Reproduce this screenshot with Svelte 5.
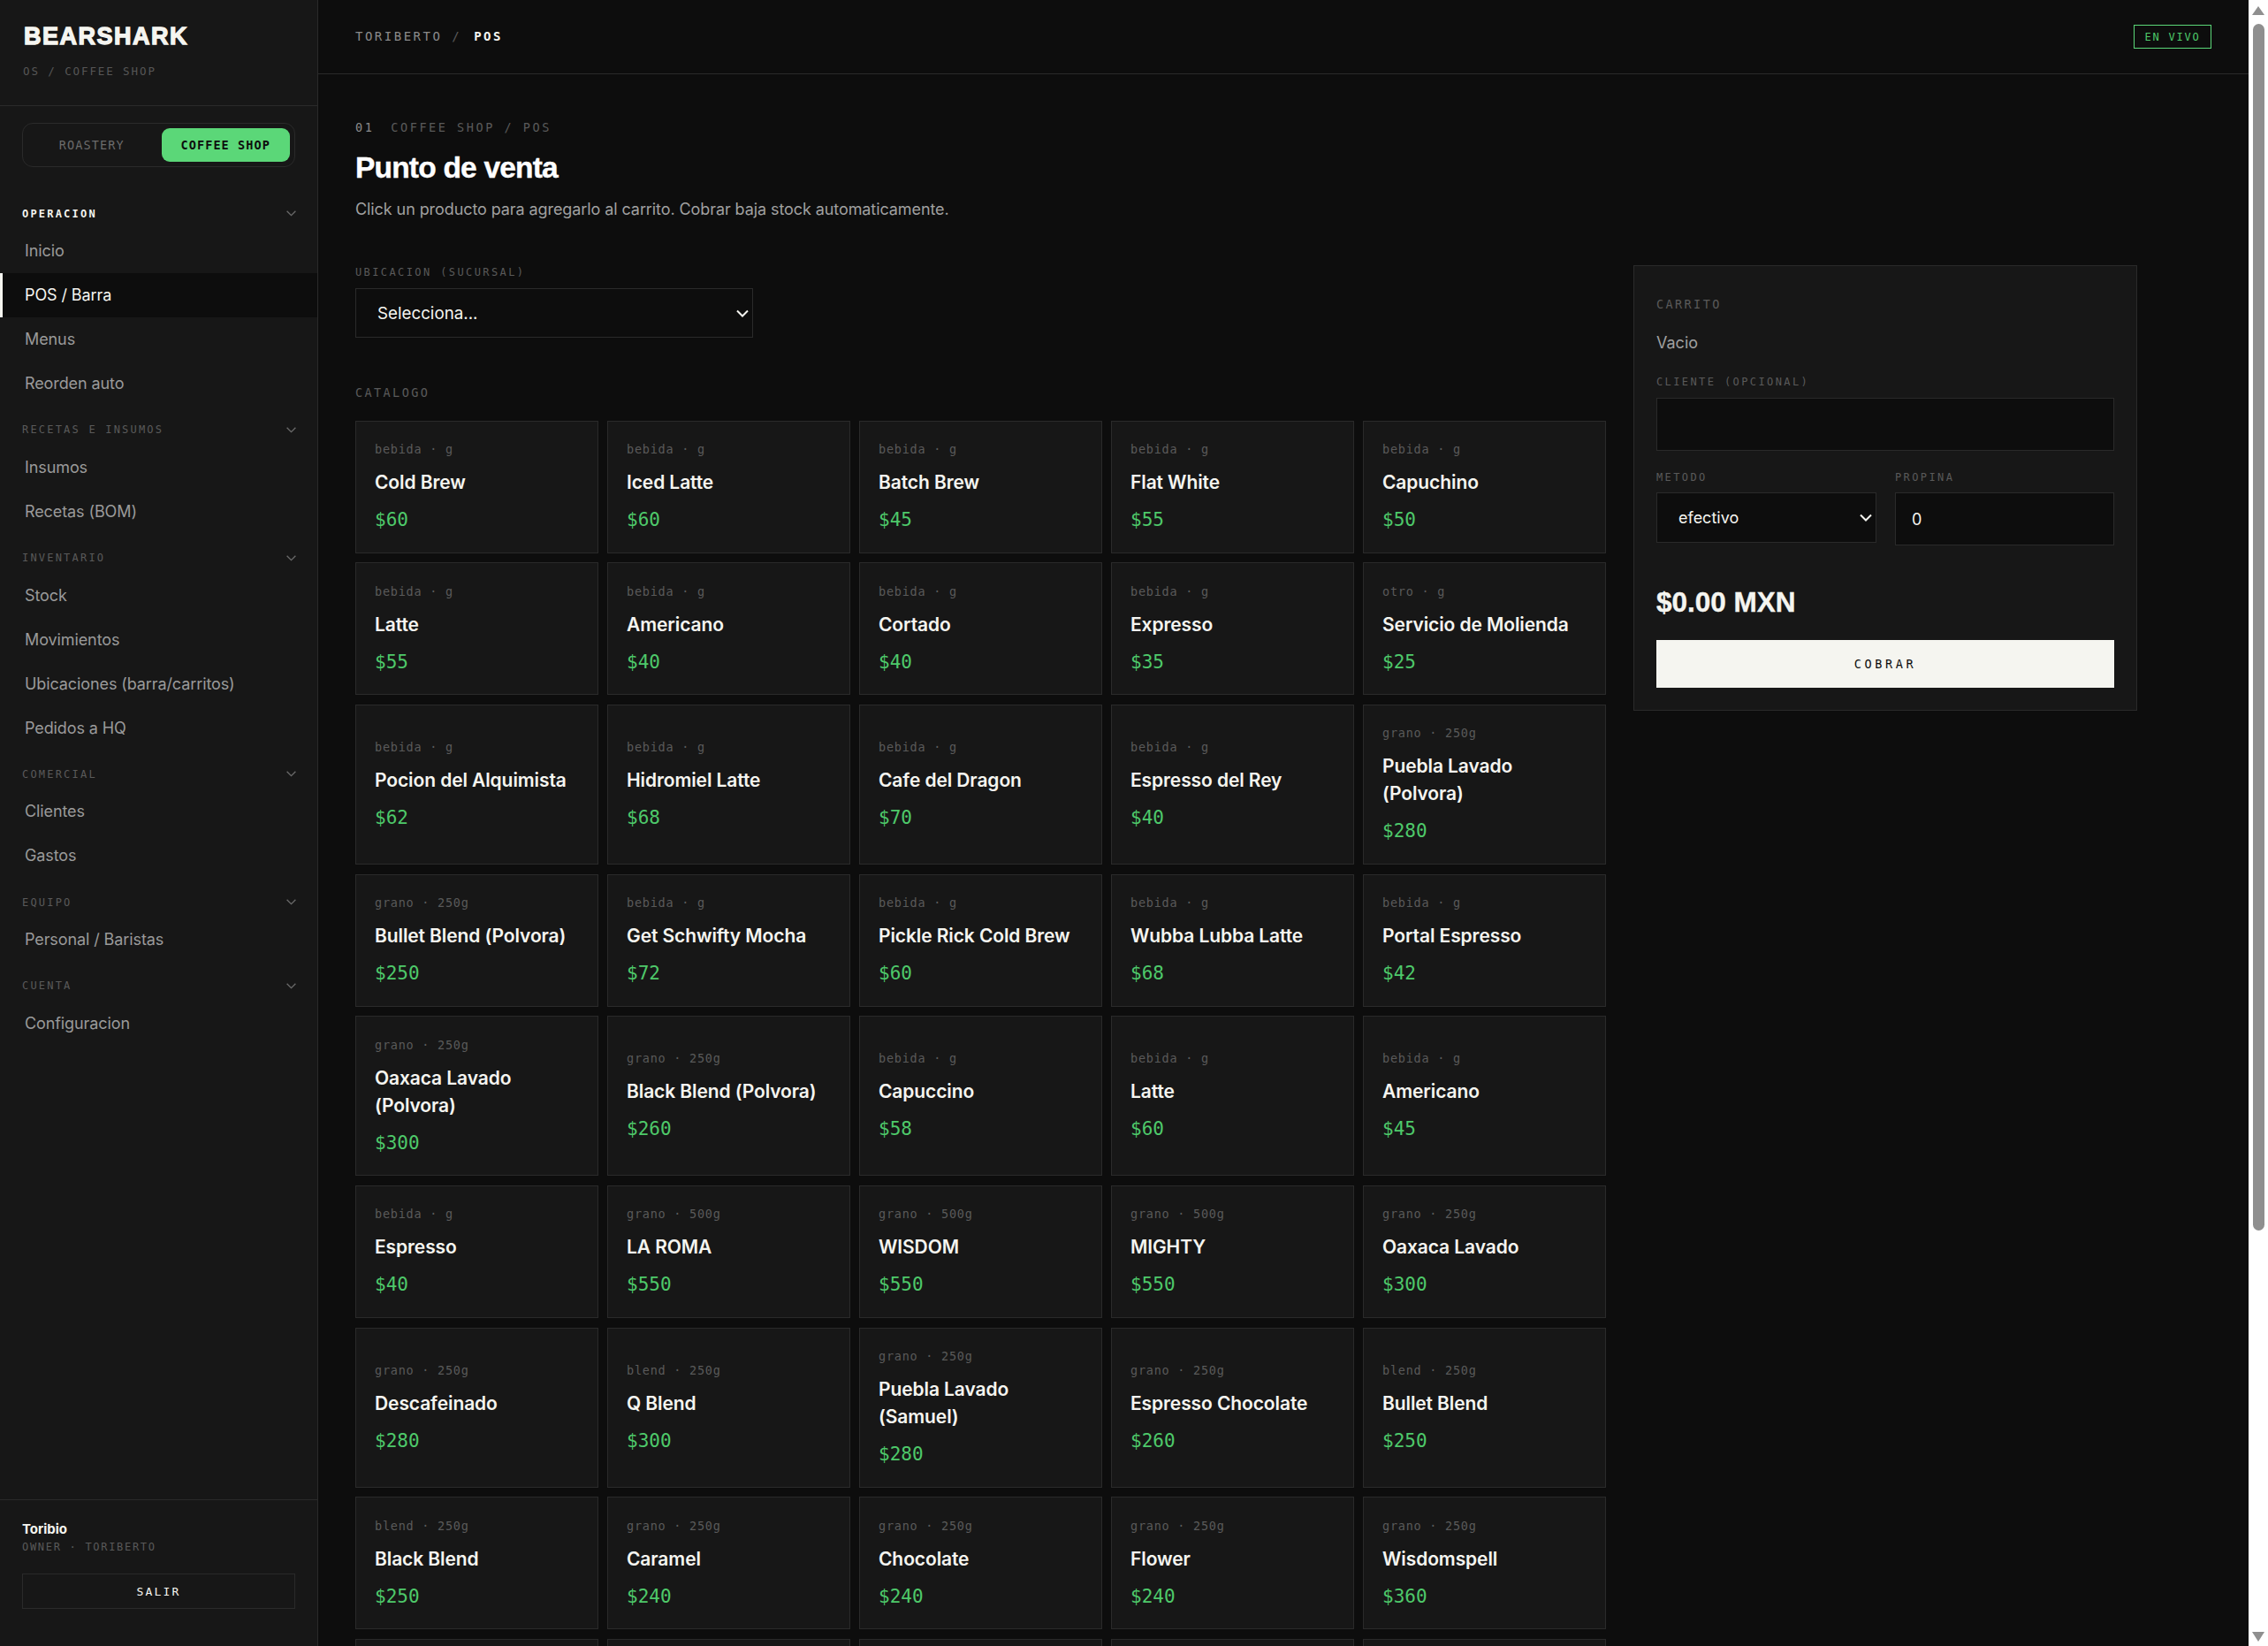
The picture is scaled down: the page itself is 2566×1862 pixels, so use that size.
<script>
  const navGroups = [
    { title: 'OPERACION', open: true, items: ['Inicio', 'POS / Barra', 'Menus', 'Reorden auto'] },
    { title: 'RECETAS E INSUMOS', items: ['Insumos', 'Recetas (BOM)'] },
    { title: 'INVENTARIO', items: ['Stock', 'Movimientos', 'Ubicaciones (barra/carritos)', 'Pedidos a HQ'] },
    { title: 'COMERCIAL', items: ['Clientes', 'Gastos'] },
    { title: 'EQUIPO', items: ['Personal / Baristas'] },
    { title: 'CUENTA', items: ['Configuracion'] }
  ];
  const p = (k, n, pr) => ({ k, n, pr });
  const products = [
    p('bebida · g','Cold Brew','$60'),p('bebida · g','Iced Latte','$60'),p('bebida · g','Batch Brew','$45'),p('bebida · g','Flat White','$55'),p('bebida · g','Capuchino','$50'),
    p('bebida · g','Latte','$55'),p('bebida · g','Americano','$40'),p('bebida · g','Cortado','$40'),p('bebida · g','Expresso','$35'),p('otro · g','Servicio de Molienda','$25'),
    p('bebida · g','Pocion del Alquimista','$62'),p('bebida · g','Hidromiel Latte','$68'),p('bebida · g','Cafe del Dragon','$70'),p('bebida · g','Espresso del Rey','$40'),p('grano · 250g','Puebla Lavado (Polvora)','$280'),
    p('grano · 250g','Bullet Blend (Polvora)','$250'),p('bebida · g','Get Schwifty Mocha','$72'),p('bebida · g','Pickle Rick Cold Brew','$60'),p('bebida · g','Wubba Lubba Latte','$68'),p('bebida · g','Portal Espresso','$42'),
    p('grano · 250g','Oaxaca Lavado (Polvora)','$300'),p('grano · 250g','Black Blend (Polvora)','$260'),p('bebida · g','Capuccino','$58'),p('bebida · g','Latte','$60'),p('bebida · g','Americano','$45'),
    p('bebida · g','Espresso','$40'),p('grano · 500g','LA ROMA','$550'),p('grano · 500g','WISDOM','$550'),p('grano · 500g','MIGHTY','$550'),p('grano · 250g','Oaxaca Lavado','$300'),
    p('grano · 250g','Descafeinado','$280'),p('blend · 250g','Q Blend','$300'),p('grano · 250g','Puebla Lavado (Samuel)','$280'),p('grano · 250g','Espresso Chocolate','$260'),p('blend · 250g','Bullet Blend','$250'),
    p('blend · 250g','Black Blend','$250'),p('grano · 250g','Caramel','$240'),p('grano · 250g','Chocolate','$240'),p('grano · 250g','Flower','$240'),p('grano · 250g','Wisdomspell','$360'),
    p('','',''),p('','',''),p('','',''),p('','',''),p('','','')
  ];
</script>

<div class="shell">
  <aside class="side">
    <div class="brand">
      <div class="logo">BEARSHARK</div>
      <div class="tag">OS / COFFEE SHOP</div>
    </div>
    <div class="switchwrap">
      <div class="switch">
        <button class="sw">ROASTERY</button>
        <button class="sw on">COFFEE SHOP</button>
      </div>
    </div>
    <nav class="nav">
      {#each navGroups as g}
        <div class="group">
          <div class="ghead" class:open={g.open}>
            <span>{g.title}</span>
            <svg width="13" height="13" viewBox="0 0 24 24" fill="none" stroke="#6b6b6b" stroke-width="2.4"><path d="M3 7l9 9 9-9"/></svg>
          </div>
          {#each g.items as it}
            <div class="item" class:active={it === 'POS / Barra'}>{it}</div>
          {/each}
        </div>
      {/each}
    </nav>
    <div class="user">
      <div class="uname">Toribio</div>
      <div class="urole">OWNER · TORIBERTO</div>
      <button class="logout">SALIR</button>
    </div>
  </aside>

  <div class="main">
    <header class="top">
      <div class="crumb">TORIBERTO <span class="sl">/</span> <b>POS</b></div>
      <div class="live">EN VIVO</div>
    </header>
    <div class="content">
      <div class="eyebrow"><b>01</b><span>COFFEE SHOP / POS</span></div>
      <h1>Punto de venta</h1>
      <p class="sub">Click un producto para agregarlo al carrito. Cobrar baja stock automaticamente.</p>
      <div class="cols">
        <section class="left">
          <div class="lab loc">UBICACION (SUCURSAL)</div>
          <div class="selwrap locwrap">
            <select class="ctl locsel"><option>Selecciona...</option></select>
            <svg class="chev" width="16" height="10" viewBox="0 0 16 10" fill="none" stroke="#f5f5f0" stroke-width="2"><path d="M2 1.5l6 6 6-6"/></svg>
          </div>
          <div class="cat">CATALOGO</div>
          <div class="grid">
            {#each products as x}
              <button class="card">
                {#if x.n}
                  <span class="meta">{x.k}</span>
                  <span class="name">{x.n}</span>
                  <span class="price">{x.pr}</span>
                {/if}
              </button>
            {/each}
          </div>
        </section>
        <aside class="cart">
          <div class="ct">CARRITO</div>
          <div class="empty">Vacio</div>
          <div class="lab cli">CLIENTE (OPCIONAL)</div>
          <input class="ctl inp" />
          <div class="two">
            <div>
              <div class="lab">METODO</div>
              <div class="selwrap mwrap">
                <select class="ctl msel"><option>efectivo</option></select>
                <svg class="chev" width="16" height="10" viewBox="0 0 16 10" fill="none" stroke="#f5f5f0" stroke-width="2"><path d="M2 1.5l6 6 6-6"/></svg>
              </div>
            </div>
            <div>
              <div class="lab">PROPINA</div>
              <input class="ctl inp tip" value="0" />
            </div>
          </div>
          <div class="total">$0.00 MXN</div>
          <button class="pay">COBRAR</button>
        </aside>
      </div>
    </div>
  </div>

  <div class="bar">
    <i class="up"></i>
    <i class="thumb"></i>
    <i class="down"></i>
  </div>
</div>

<style>
  :global(html), :global(body) { margin: 0; height: 100%; overflow: hidden; background: #0d0d0d; }
  :global(*) { box-sizing: border-box; }
  .shell { --mono: "DejaVu Sans Mono", monospace; display: flex; height: 1862px; overflow: hidden; font-family: Inter, "Liberation Sans", sans-serif; color: #f5f5f0; background: #0d0d0d; }
  .side { width: 360px; flex: none; background: #171717; border-right: 1px solid #2a2a2a; display: flex; flex-direction: column; height: 1862px; }
  .brand { height: 120px; padding: 24px 27px 0; border-bottom: 1px solid #2a2a2a; }
  .logo { font-family: "Liberation Sans", sans-serif; font-weight: 700; font-size: 27px; line-height: 34px; letter-spacing: 1.5px; -webkit-text-stroke: 1.3px #f5f5f0; }
  .tag { font-family: var(--mono); font-size: 12.5px; letter-spacing: 1.9px; color: #565656; margin-top: 16px; line-height: 14px; margin-left: -1px; }
  .switchwrap { padding: 19px 25px 0; }
  .switch { display: flex; height: 50px; border: 1px solid #2a2a2a; border-radius: 12px; padding: 5px; gap: 6px; }
  .sw { flex: 1 1 0; min-width: 0; border: 0; background: none; border-radius: 9px; font-family: var(--mono); font-size: 13.5px; letter-spacing: 1.1px; color: #6b6b6b; padding: 0; white-space: nowrap; }
  .sw.on { background: #5bd778; color: #0d0d0d; font-weight: 700; }
  .nav { padding-top: 43.5px; flex: 1; }
  .group { margin-bottom: 18.8px; }
  .ghead { display: flex; justify-content: space-between; align-items: center; padding: 0 23px 0 25px; height: 18px; font-family: var(--mono); font-size: 12px; letter-spacing: 2.2px; color: #5a5a5a; margin-bottom: 8px; }
  .ghead.open { color: #f5f5f0; font-weight: 700; }
  .item { height: 50px; display: flex; align-items: center; padding-left: 28px; font-size: 18px; letter-spacing: -0.1px; color: #9a9a9a; }
  .item.active { background: #0d0d0d; color: #f5f5f0; border-left: 3px solid #f5f5f0; padding-left: 25px; }
  .user { height: 166px; border-top: 1px solid #2a2a2a; padding: 23px 25px 0; }
  .uname { font-weight: 700; font-size: 15px; line-height: 20px; }
  .urole { font-family: var(--mono); font-size: 12px; letter-spacing: 1.7px; color: #5a5a5a; line-height: 16px; margin-top: 2px; }
  .logout { display: block; width: 309px; height: 40px; margin-top: 22px; background: none; border: 1px solid #2a2a2a; color: #f5f5f0; font-family: var(--mono); font-size: 13px; letter-spacing: 2.2px; }
  .main { flex: 1; min-width: 0; height: 1862px; overflow: hidden; }
  .top { height: 84px; border-bottom: 1px solid #2a2a2a; display: flex; justify-content: space-between; align-items: center; padding: 0 42px; }
  .crumb { font-family: var(--mono); font-size: 14px; letter-spacing: 2.5px; color: #8a8a8a; margin-top: -1px; }
  .crumb .sl { color: #5a5a5a; margin-right: 3px; }
  .crumb b { color: #f5f5f0; }
  .live { border: 1px solid #5bd778; color: #4ec96a; font-family: var(--mono); font-size: 12px; letter-spacing: 1.8px; height: 27px; width: 88px; display: flex; align-items: center; justify-content: center; }
  .content { padding: 52px 42px 0; width: 2058px; }
  .eyebrow { display: flex; gap: 19px; font-family: var(--mono); font-size: 13.5px; letter-spacing: 2.55px; color: #5a5a5a; line-height: 16px; }
  .eyebrow b { color: #8a8a8a; font-weight: 400; }
  h1 { margin: 17px 0 0; font-family: "Liberation Sans", sans-serif; font-size: 33.5px; line-height: 42px; font-weight: 700; letter-spacing: -0.8px; color: #fff; -webkit-text-stroke: 0.4px #fff; }
  .sub { margin: 12px 0 0; font-size: 18px; letter-spacing: -0.085px; line-height: 28px; color: #a0a0a0; }
  .cols { display: grid; grid-template-columns: 1415px 570px; column-gap: 31px; margin-top: 49px; align-items: start; }
  .lab { font-family: var(--mono); font-size: 12px; letter-spacing: 2.4px; color: #5a5a5a; line-height: 14px; }
  .lab.loc { margin-top: 1px; }
  .ctl { background: #0d0d0d; border: 1px solid #2a2a2a; color: #f5f5f0; font-family: Inter, sans-serif; font-size: 18px; border-radius: 0; outline: none; }
  .selwrap { position: relative; }
  select.ctl { appearance: none; -webkit-appearance: none; }
  .chev { position: absolute; right: 4px; top: 50%; margin-top: -4px; pointer-events: none; }
  .locwrap { width: 450px; margin-top: 11px; }
  .locsel { display: block; width: 100%; height: 56px; padding: 0 24px; font-size: 18.75px; }
  .cat { font-family: var(--mono); font-size: 13.5px; letter-spacing: 2.4px; color: #5a5a5a; line-height: 16px; margin-top: 53.5px; }
  .grid { display: grid; grid-template-columns: repeat(5, 275px); gap: 10.7px 10px; margin-top: 24px; }
  .card { min-height: 150px; background: #171717; border: 1px solid #2a2a2a; display: flex; flex-direction: column; justify-content: center; align-items: flex-start; padding: 22.5px 21px; text-align: left; font-family: inherit; color: inherit; }
  .meta { font-family: var(--mono); font-size: 13.5px; letter-spacing: 0.75px; color: #5a5a5a; line-height: 18px; }
  .name { font-size: 21px; font-weight: 600; letter-spacing: -0.1px; line-height: 31px; margin-top: 13px; }
  .price { font-family: var(--mono); font-size: 21px; color: #4ec96a; line-height: 27px; margin-top: 14px; }
  .cart { background: #171717; border: 1px solid #2a2a2a; padding: 35px 25px 25px; }
  .ct { font-family: var(--mono); font-size: 13.5px; letter-spacing: 2.4px; color: #5a5a5a; line-height: 16px; }
  .empty { font-size: 18px; color: #a0a0a0; line-height: 28px; margin-top: 22px; }
  .lab.cli { margin-top: 22.5px; }
  .inp { display: block; width: 100%; height: 60px; margin-top: 11.5px; padding: 0 18px; }
  .two { display: grid; grid-template-columns: 249px 248px; gap: 21px; margin-top: 22.5px; }
  .tip { margin-top: 10.5px; }
  .mwrap { margin-top: 10.5px; }
  .msel { display: block; width: 100%; height: 56.5px; padding: 0 24px; }
  .total { font-family: "Liberation Sans", sans-serif; font-weight: 700; font-size: 31.5px; line-height: 40px; margin-top: 43.5px; -webkit-text-stroke: 0.4px #f5f5f0; }
  .pay { display: block; width: 100%; height: 54px; margin-top: 23px; background: #f5f5f0; border: 0; color: #0d0d0d; font-family: var(--mono); font-size: 13.5px; letter-spacing: 3.6px; }
  .bar { width: 22px; flex: none; height: 1862px; background: #fff; position: relative; }
  .thumb { position: absolute; left: 5px; width: 13px; top: 27px; height: 1365px; background: #8f8f8f; border-radius: 7px; }
  .up, .down { position: absolute; left: 4px; width: 0; height: 0; border-left: 7.5px solid transparent; border-right: 7.5px solid transparent; }
  .up { top: 7px; border-bottom: 10px solid #8f8f8f; }
  .down { bottom: 5px; border-top: 11px solid #8f8f8f; }
</style>
